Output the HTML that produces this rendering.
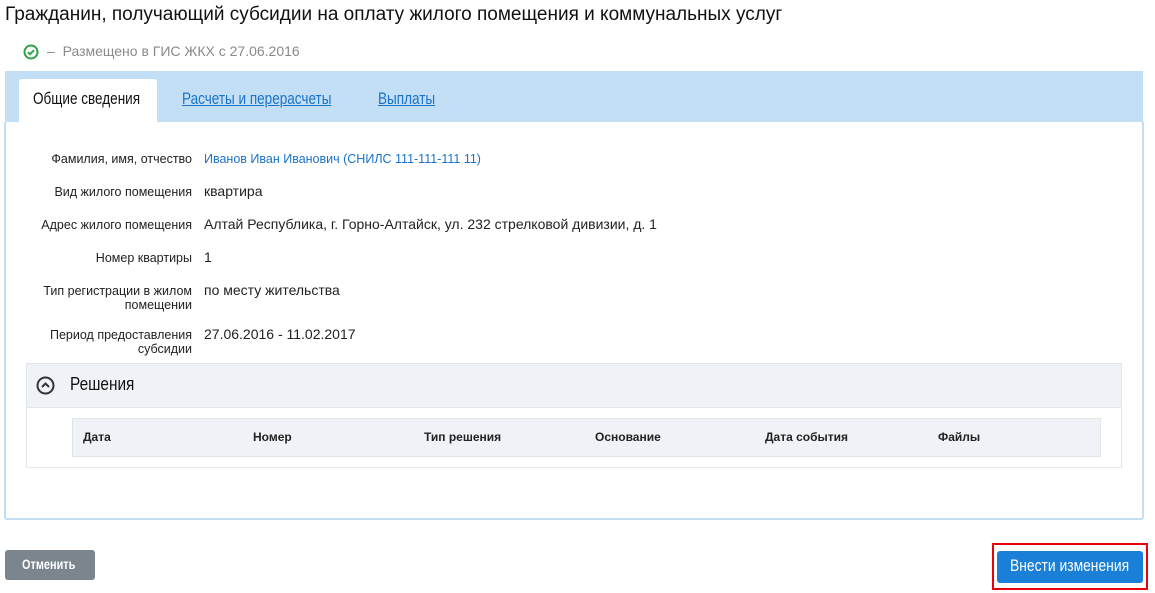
<!DOCTYPE html>
<html><head><meta charset="utf-8"><style>
body{margin:0;width:1155px;height:593px;background:#fff;position:relative;overflow:hidden;font-family:"Liberation Sans",sans-serif;color:#222}
.n{font-family:"Liberation Sans Narrow","Liberation Sans",sans-serif}
.a{position:absolute;white-space:nowrap}
.c{transform-origin:left top;display:inline-block}
.lbl{position:absolute;right:963px;text-align:right;font-size:12.5px;line-height:14px;color:#222}
.val{position:absolute;left:204px;font-size:14px;color:#222;white-space:nowrap}
.th{position:absolute;top:430px;font-size:12px;font-weight:bold;color:#222}
</style></head><body>
<div class="a n" style="left:5px;top:4px;font-size:19px;color:#111">Гражданин, получающий субсидии на оплату жилого помещения и коммунальных услуг</div>
<svg class="a" style="left:23px;top:44px" width="16" height="16" viewBox="0 0 16 16"><circle cx="8" cy="8" r="6.5" fill="none" stroke="#2ea24a" stroke-width="2"/><path d="M5 8.2l2 2 4-4" fill="none" stroke="#2ea24a" stroke-width="2"/></svg>
<div class="a" style="left:47px;top:43px;font-size:14px;color:#8a8a8a">–&nbsp; Размещено в ГИС ЖКХ с 27.06.2016</div>
<div class="a" style="left:5px;top:71px;width:1138px;height:51px;background:#c3dff5"></div>
<div class="a" style="left:19px;top:79px;width:138px;height:44px;background:#fff;border-radius:3px 3px 0 0"></div>
<div class="a n c" style="left:33px;top:90px;font-size:16.5px;color:#111;transform:scaleX(0.82)">Общие сведения</div>
<div class="a n c" style="left:182px;top:90px;font-size:16.5px;color:#1a73c9;text-decoration:underline;transform:scaleX(0.82)">Расчеты и перерасчеты</div>
<div class="a n c" style="left:378px;top:90px;font-size:16.5px;color:#1a73c9;text-decoration:underline;transform:scaleX(0.82)">Выплаты</div>
<div class="a" style="left:4px;top:122px;width:1136px;height:396px;border:2px solid #c3dff5;border-top:none;border-radius:0 0 3px 3px"></div>
<div class="lbl n" style="top:152px">Фамилия, имя, отчество</div>
<div class="val" style="top:152px;font-size:12.5px;color:#1a73c9">Иванов Иван Иванович (СНИЛС 111-111-111 11)</div>
<div class="lbl n" style="top:185px">Вид жилого помещения</div>
<div class="val" style="top:183px">квартира</div>
<div class="lbl n" style="top:218px">Адрес жилого помещения</div>
<div class="val" style="top:216px">Алтай Республика, г. Горно-Алтайск, ул. 232 стрелковой дивизии, д. 1</div>
<div class="lbl n" style="top:251px">Номер квартиры</div>
<div class="val" style="top:249px">1</div>
<div class="lbl n" style="top:284px">Тип регистрации в жилом<br>помещении</div>
<div class="val" style="top:282px">по месту жительства</div>
<div class="lbl n" style="top:328px">Период предоставления<br>субсидии</div>
<div class="val" style="top:326px">27.06.2016 - 11.02.2017</div>
<div class="a" style="left:26px;top:363px;width:1094px;height:103px;border:1px solid #e3e7eb"></div>
<div class="a" style="left:27px;top:364px;width:1094px;height:43px;background:#eff3f7;border-bottom:1px solid #e3e7eb"></div>
<svg class="a" style="left:36px;top:376px" width="19" height="19" viewBox="0 0 19 19"><circle cx="9.5" cy="9.5" r="8" fill="none" stroke="#333" stroke-width="2"/><path d="M6 11l3.5-3.5 3.5 3.5" fill="none" stroke="#333" stroke-width="2"/></svg>
<div class="a n c" style="left:70px;top:373px;font-size:18.5px;color:#111;transform:scaleX(0.83)">Решения</div>
<div class="a" style="left:72px;top:418px;width:1027px;height:37px;background:#eff3f7;border:1px solid #e0e5ea"></div>
<div class="th" style="left:83px">Дата</div>
<div class="th" style="left:253px">Номер</div>
<div class="th" style="left:424px">Тип решения</div>
<div class="th" style="left:595px">Основание</div>
<div class="th" style="left:765px">Дата события</div>
<div class="th" style="left:938px">Файлы</div>
<div class="a" style="left:5px;top:550px;width:90px;height:30px;background:#7a858e;border-radius:3px"></div>
<div class="a n c" style="left:22px;top:556px;font-size:14px;font-weight:bold;color:#fff;transform:scaleX(0.78)">Отменить</div>
<div class="a" style="left:992px;top:543px;width:152px;height:43px;border:2px solid #e8000b"></div>
<div class="a" style="left:997px;top:551px;width:146px;height:32px;background:#1a7fd6;border-radius:3px"></div>
<div class="a n c" style="left:1010px;top:557px;font-size:16.5px;color:#fff;transform:scaleX(0.84)">Внести изменения</div>
</body></html>
